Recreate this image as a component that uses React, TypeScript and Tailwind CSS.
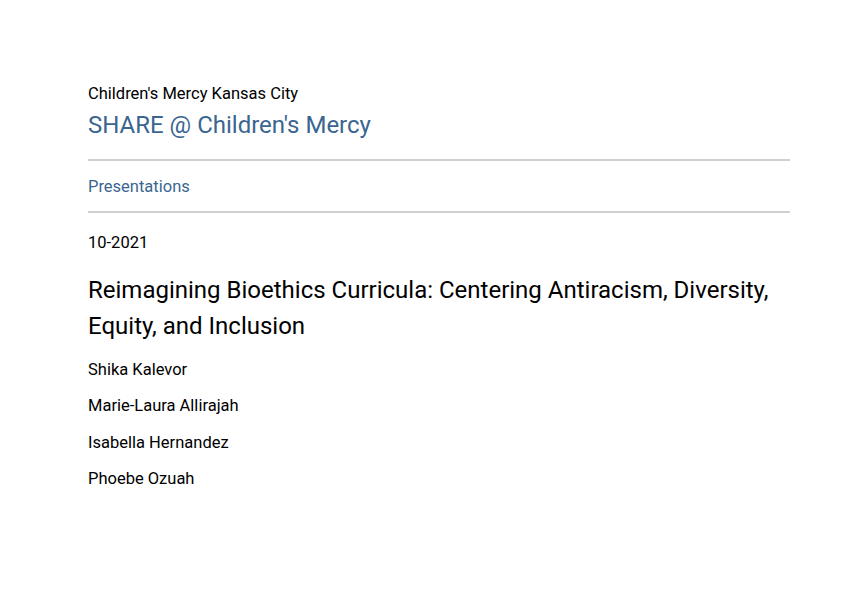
import React from "react";

const authors = ["Shika Kalevor", "Marie-Laura Allirajah", "Isabella Hernandez", "Phoebe Ozuah"];

export default function App() {
  return (
    <div className="min-h-[603px] bg-white font-['Roboto',sans-serif] text-black">
      <div className="ml-[88px] w-[702px] pt-[84px]">
        <header>
          <p className="text-[16.5px] leading-[20px]">Children's Mercy Kansas City</p>
          <h1 className="mt-[6px] text-[24px] leading-[30px] text-[#3a6591]">SHARE @ Children's Mercy</h1>
        </header>

        <nav className="mt-[19px] border-y-2 border-[#d0d0d0] pt-[14px] pb-[12px]">
          <span className="text-[16.5px] leading-[20px] text-[#3a6591]">Presentations</span>
        </nav>

        <p className="mt-[20px] text-[16.5px] leading-[20px]">10-2021</p>

        <h2 className="mt-[19px] text-[24px] leading-[36px]">
          Reimagining Bioethics Curricula: Centering Antiracism, Diversity, Equity, and Inclusion
        </h2>

        <ul className="mt-[8px]">
          {authors.map((a) => (
            <li key={a} className="text-[16.5px] leading-[36.33px]">
              {a}
            </li>
          ))}
        </ul>
      </div>
    </div>
  );
}
